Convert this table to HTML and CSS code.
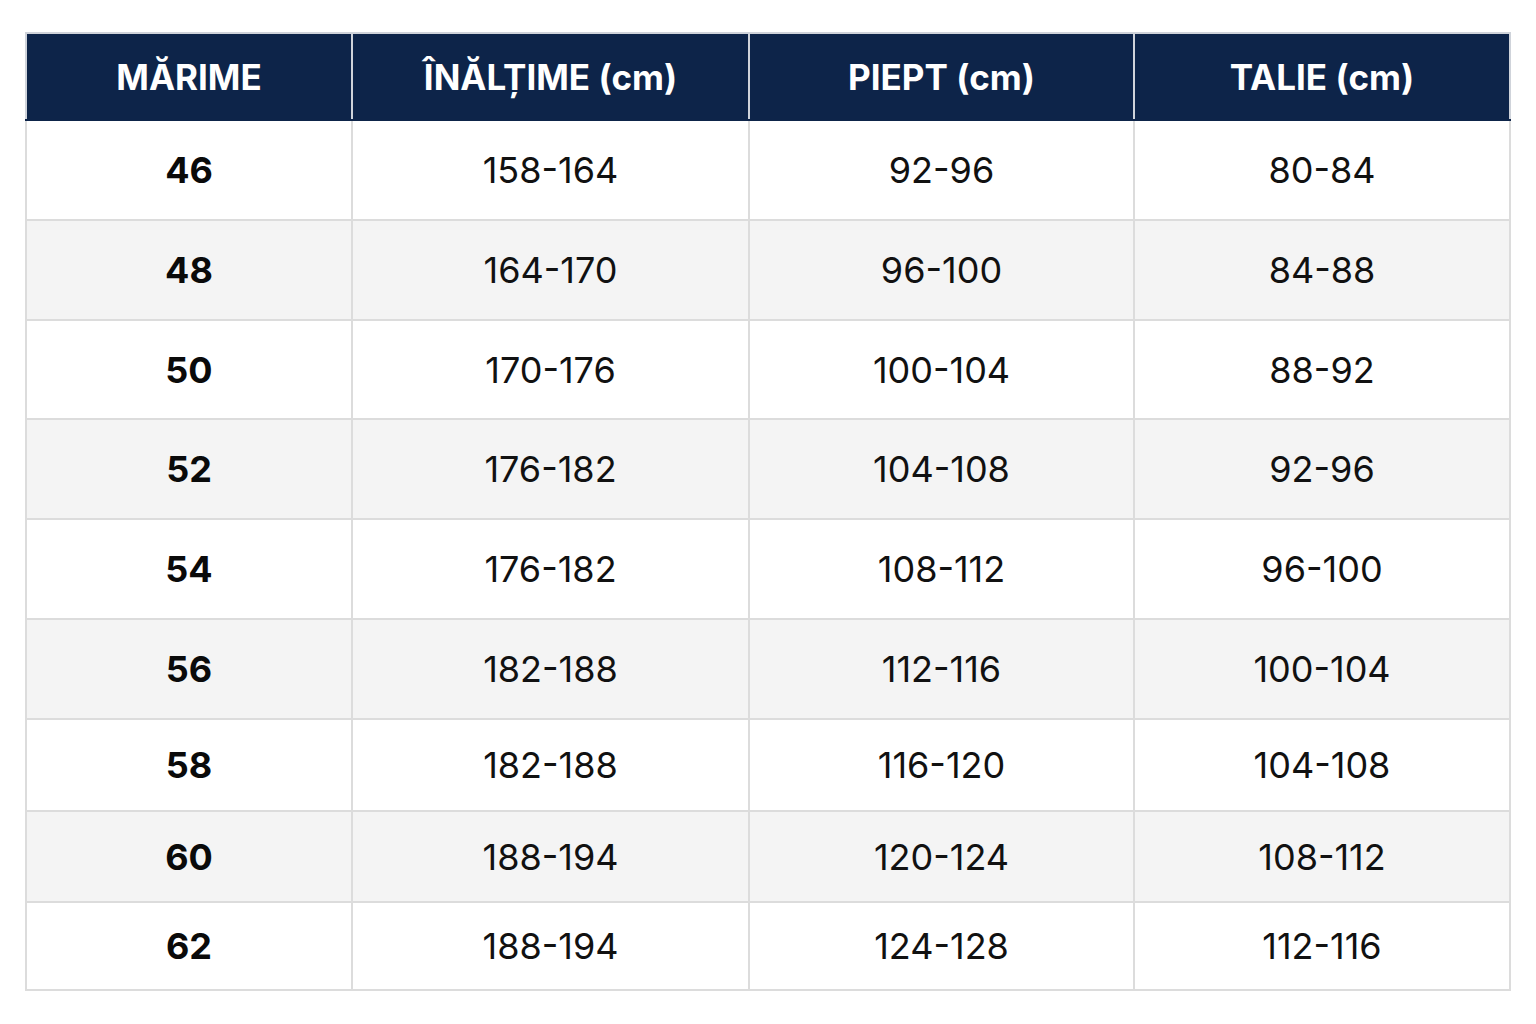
FILE: index.html
```html
<!DOCTYPE html>
<html lang="ro">
<head>
<meta charset="utf-8">
<title>Tabel mărimi</title>
<link rel="stylesheet" href="styles.css">
</head>
<body>
<table class="sizes">
  <colgroup>
    <col class="c1"><col class="c2"><col class="c3"><col class="c4">
  </colgroup>
  <thead>
    <tr class="head"><th>MĂRIME</th><th>ÎNĂLȚIME (cm)</th><th>PIEPT (cm)</th><th>TALIE (cm)</th></tr>
  </thead>
  <tbody>
    <tr class="r100"><td class="size">46</td><td>158-164</td><td>92-96</td><td>80-84</td></tr>
    <tr class="r100 alt"><td class="size">48</td><td>164-170</td><td>96-100</td><td>84-88</td></tr>
    <tr class="r99"><td class="size">50</td><td>170-176</td><td>100-104</td><td>88-92</td></tr>
    <tr class="r100 alt"><td class="size">52</td><td>176-182</td><td>104-108</td><td>92-96</td></tr>
    <tr class="r100"><td class="size">54</td><td>176-182</td><td>108-112</td><td>96-100</td></tr>
    <tr class="r100 alt"><td class="size">56</td><td>182-188</td><td>112-116</td><td>100-104</td></tr>
    <tr class="r92"><td class="size">58</td><td>182-188</td><td>116-120</td><td>104-108</td></tr>
    <tr class="r91 alt"><td class="size">60</td><td>188-194</td><td>120-124</td><td>108-112</td></tr>
    <tr class="r88"><td class="size">62</td><td>188-194</td><td>124-128</td><td>112-116</td></tr>
  </tbody>
</table>
</body>
</html>
```
FILE: styles.css
```css
html, body {
  margin: 0;
  background: #ffffff;
}
body {
  padding: 32px 0 0 25px;
  font-family: Inter, Roboto, "Liberation Sans", sans-serif;
}
.sizes {
  border-collapse: collapse;
  table-layout: fixed;
  width: 1484px;
  border: 2px solid #dcdcdc;
}
.c1 { width: 326px; }
.c2 { width: 397px; }
.c3 { width: 385px; }
.c4 { width: 376px; }
.sizes th, .sizes td {
  padding: 0;
  text-align: center;
  vertical-align: middle;
  border: 2px solid #dcdcdc;
}
.head {
  height: 87px;
  background: #0d2449;
}
.head th {
  color: #ffffff;
  font-family: Inter, Roboto, sans-serif;
  font-weight: 700;
  font-size: 35px;
  border-top-color: #cfd3da;
  border-left-color: #cfd3da;
  border-right-color: #cfd3da;
  border-bottom-color: #0d2449;
}
.sizes td {
  color: #111111;
  font-size: 36px;
  font-weight: 400;
  background: #ffffff;
}
.sizes tr.alt td { background: #f4f4f4; }
.sizes td.size {
  font-weight: 700;
  font-size: 36px;
  color: #0a0a0a;
}
.r100 { height: 100px; }
.r99 { height: 99px; }
.r92 { height: 92px; }
.r91 { height: 91px; }
.r88 { height: 88px; }
```
